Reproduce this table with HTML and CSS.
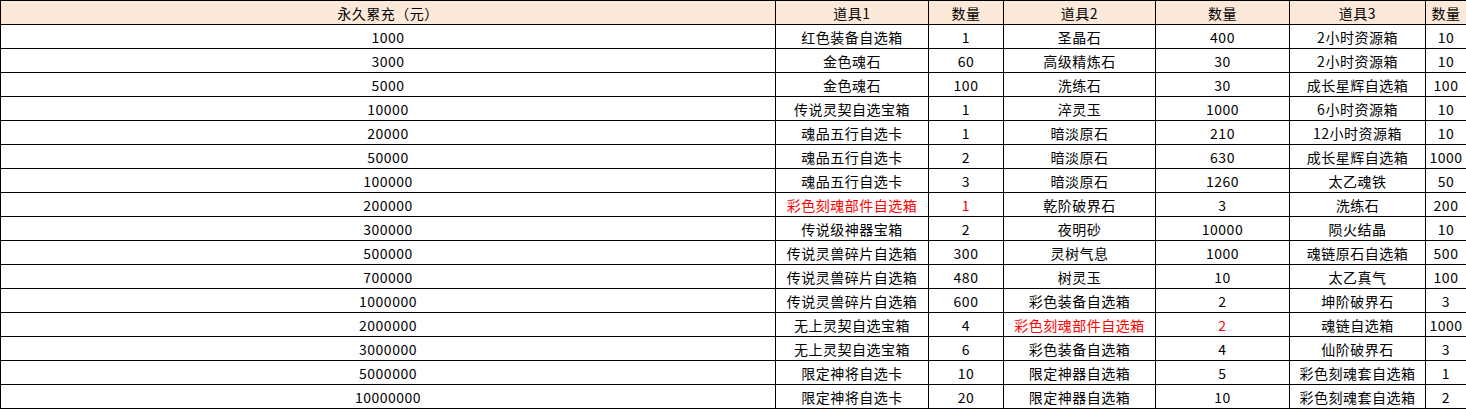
FILE: index.html
```html
<!DOCTYPE html>
<html>
<head>
<meta charset="utf-8">
<link rel="stylesheet" href="styles.css">
</head>
<body>
<table class="sheet">
<colgroup>
<col class="c1"><col class="c2"><col class="c3"><col class="c4"><col class="c5"><col class="c6"><col class="c7">
</colgroup>
<thead>
<tr class="head"><th>永久累充（元）</th><th>道具1</th><th>数量</th><th>道具2</th><th>数量</th><th>道具3</th><th>数量</th></tr>
</thead>
<tbody>
<tr><td>1000</td><td>红色装备自选箱</td><td>1</td><td>圣晶石</td><td>400</td><td>2小时资源箱</td><td>10</td></tr>
<tr><td>3000</td><td>金色魂石</td><td>60</td><td>高级精炼石</td><td>30</td><td>2小时资源箱</td><td>10</td></tr>
<tr><td>5000</td><td>金色魂石</td><td>100</td><td>洗练石</td><td>30</td><td>成长星辉自选箱</td><td>100</td></tr>
<tr><td>10000</td><td>传说灵契自选宝箱</td><td>1</td><td>淬灵玉</td><td>1000</td><td>6小时资源箱</td><td>10</td></tr>
<tr><td>20000</td><td>魂品五行自选卡</td><td>1</td><td>暗淡原石</td><td>210</td><td>12小时资源箱</td><td>10</td></tr>
<tr><td>50000</td><td>魂品五行自选卡</td><td>2</td><td>暗淡原石</td><td>630</td><td>成长星辉自选箱</td><td>1000</td></tr>
<tr><td>100000</td><td>魂品五行自选卡</td><td>3</td><td>暗淡原石</td><td>1260</td><td>太乙魂铁</td><td>50</td></tr>
<tr><td>200000</td><td class="red">彩色刻魂部件自选箱</td><td class="red">1</td><td>乾阶破界石</td><td>3</td><td>洗练石</td><td>200</td></tr>
<tr><td>300000</td><td>传说级神器宝箱</td><td>2</td><td>夜明砂</td><td>10000</td><td>陨火结晶</td><td>10</td></tr>
<tr><td>500000</td><td>传说灵兽碎片自选箱</td><td>300</td><td>灵树气息</td><td>1000</td><td>魂链原石自选箱</td><td>500</td></tr>
<tr><td>700000</td><td>传说灵兽碎片自选箱</td><td>480</td><td>树灵玉</td><td>10</td><td>太乙真气</td><td>100</td></tr>
<tr><td>1000000</td><td>传说灵兽碎片自选箱</td><td>600</td><td>彩色装备自选箱</td><td>2</td><td>坤阶破界石</td><td>3</td></tr>
<tr><td>2000000</td><td>无上灵契自选宝箱</td><td>4</td><td class="red">彩色刻魂部件自选箱</td><td class="red">2</td><td>魂链自选箱</td><td>1000</td></tr>
<tr><td>3000000</td><td>无上灵契自选宝箱</td><td>6</td><td>彩色装备自选箱</td><td>4</td><td>仙阶破界石</td><td>3</td></tr>
<tr><td>5000000</td><td>限定神将自选卡</td><td>10</td><td>限定神器自选箱</td><td>5</td><td>彩色刻魂套自选箱</td><td>1</td></tr>
<tr><td>10000000</td><td>限定神将自选卡</td><td>20</td><td>限定神器自选箱</td><td>10</td><td>彩色刻魂套自选箱</td><td>2</td></tr>
</tbody>
</table>
</body>
</html>
```
FILE: styles.css
```css
html, body {
  margin: 0;
  padding: 0;
  background: #ffffff;
}
.sheet {
  border-collapse: collapse;
  table-layout: fixed;
  width: 1466px;
  font-family: "Noto Sans CJK SC", "DejaVu Sans", sans-serif;
  font-size: 14px;
  letter-spacing: 0.5px;
  color: #000;
}
.c1 { width: 775px; }
.c2 { width: 153px; }
.c3 { width: 75px; }
.c4 { width: 152px; }
.c5 { width: 134px; }
.c6 { width: 136px; }
.c7 { width: 41px; }
.sheet th,
.sheet td {
  border: 1px solid #000;
  height: 23px;
  padding: 0;
  text-align: center;
  vertical-align: middle;
  font-weight: normal;
  line-height: 16px;
  white-space: nowrap;
  overflow: hidden;
}
.head th {
  background: #fde9d9;
}
.red {
  color: #ff0000;
}
```
